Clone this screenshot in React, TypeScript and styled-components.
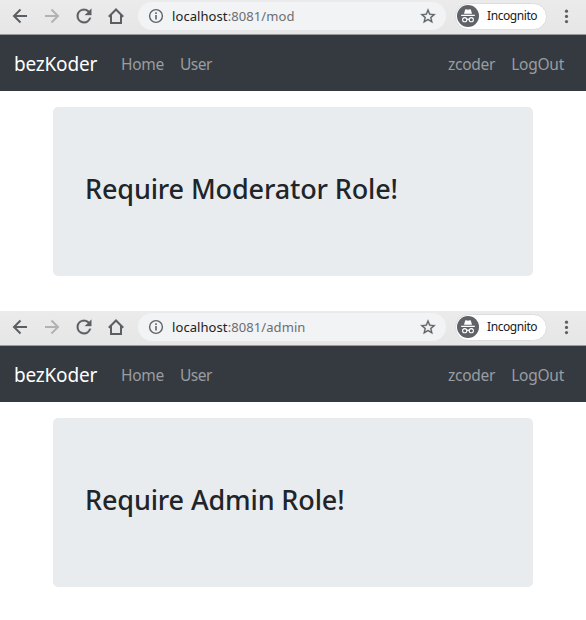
import React from "react";
import styled, { createGlobalStyle } from "styled-components";

const GlobalStyle = createGlobalStyle`
  *, *::before, *::after { box-sizing: border-box; }
  body {
    margin: 0;
    background: #fff;
    color: #212529;
    font-family: "Noto Sans", "Open Sans", sans-serif;
  }
`;

const Page = styled.main`
  display: flex;
  flex-direction: column;
  gap: 35px;
  width: 586px;
  height: 620px;
  overflow: hidden;
`;

const BrowserWindow = styled.section`
  display: flex;
  flex-direction: column;
`;

const Toolbar = styled.div`
  display: flex;
  align-items: center;
  height: 35px;
  padding: 0 9px 3px;
  background: linear-gradient(#ebebeb, #e6e6e6);
  border-bottom: 1px solid #98999b;
`;

const ToolButton = styled.button<{ $dim?: boolean }>`
  display: flex;
  align-items: center;
  justify-content: center;
  width: 22px;
  height: 28px;
  margin-right: 10px;
  padding: 0;
  border: 0;
  background: none;
  color: ${(p) => (p.$dim ? "#b1b2b4" : "#5b5e63")};
`;

const AddressBar = styled.div`
  display: flex;
  align-items: center;
  width: 308px;
  height: 28px;
  margin: 1px 9px 0 1px;
  padding: 0 10px;
  border-radius: 14px;
  background: #f1f3f4;
  color: #5f6368;
`;

const Url = styled.span`
  flex: 1;
  padding-left: 8px;
  font-size: 13px;
  line-height: 18px;
  letter-spacing: 0.08px;
  color: #6b6e72;
`;

const Host = styled.span`
  color: #202124;
`;

const Profile = styled.div`
  display: flex;
  align-items: center;
  width: 92px;
  height: 27px;
  margin-top: 1px;
  padding-left: 1px;
  border: 1px solid #dcdddf;
  border-radius: 14px;
  background: #fff;
`;

const ProfileName = styled.span`
  margin-left: 8px;
  font-size: 12px;
  line-height: 16px;
  letter-spacing: -0.42px;
  color: #202124;
`;

const MenuButton = styled(ToolButton)`
  margin: 0 0 0 8px;
`;

const Navbar = styled.nav`
  display: flex;
  align-items: center;
  height: 56px;
  padding: 2px 22px 0 14px;
  background: #343a40;
`;

const Brand = styled.a`
  width: 107px;
  font-size: 19px;
  line-height: 30px;
  letter-spacing: -0.2px;
  color: #fff;
`;

const NavGroup = styled.div<{ $end?: boolean }>`
  display: flex;
  gap: 16px;
  margin-left: ${(p) => (p.$end ? "auto" : "0")};
`;

const NavLink = styled.a<{ $tracking: number }>`
  font-size: 15.5px;
  line-height: 24px;
  letter-spacing: ${(p) => p.$tracking}px;
  color: #9a9da0;
`;

const Jumbotron = styled.header`
  width: 480px;
  height: 169px;
  margin: 16px auto 0;
  padding: 65px 32px 64px;
  border-radius: 5px;
  background: #e9ecef;
`;

const Title = styled.h3`
  margin: 0;
  font-size: 27px;
  font-weight: 500;
  line-height: 34px;
  letter-spacing: -0.13px;
  white-space: nowrap;
`;

const BackIcon = () => (
  <svg width="22" height="22" viewBox="0 0 22 22" fill="none" stroke="currentColor" strokeWidth="2">
    <path d="M18 11H5.5M11.5 4.5 5 11l6.5 6.5" />
  </svg>
);

const ForwardIcon = () => (
  <svg width="22" height="22" viewBox="0 0 22 22" fill="none" stroke="currentColor" strokeWidth="2">
    <path d="M4 11h12.5M10.5 4.5 17 11l-6.5 6.5" />
  </svg>
);

const ReloadIcon = () => (
  <svg width="22" height="22" viewBox="0 0 24 24" fill="currentColor" stroke="currentColor" strokeWidth="0.3">
    <path d="M17.65 6.35A7.96 7.96 0 0 0 12 4a8 8 0 1 0 7.73 10h-2.08A6 6 0 1 1 12 6c1.66 0 3.14.69 4.22 1.78L13 11h7V4z" />
  </svg>
);

const HomeIcon = () => (
  <svg width="22" height="22" viewBox="0 0 22 22" fill="none" stroke="currentColor" strokeWidth="2">
    <path d="M3.8 11.8 11 4.5l7.2 7.3M6 10.2V18h10v-7.8" />
  </svg>
);

const InfoIcon = () => (
  <svg width="16" height="16" viewBox="0 0 16 16">
    <circle cx="8" cy="8" r="6.4" fill="none" stroke="currentColor" strokeWidth="1.4" />
    <path d="M7.2 7h1.6v4.5H7.2zM7.2 4.3h1.6v1.6H7.2z" fill="currentColor" />
  </svg>
);

const StarIcon = () => (
  <svg width="16" height="16" viewBox="1.5 1.2 21 21" fill="currentColor" stroke="currentColor" strokeWidth="0.3">
    <path d="m22 9.24-7.19-.62L12 2 9.19 8.63 2 9.24l5.46 4.73L5.82 21 12 17.27 18.18 21l-1.63-7.03zM12 15.4l-3.76 2.27 1-4.28-3.32-2.88 4.38-.38L12 6.1l1.71 4.04 4.38.38-3.32 2.88 1 4.28z" />
  </svg>
);

const IncognitoIcon = () => (
  <svg width="22" height="22" viewBox="0 0 22 22">
    <circle cx="11" cy="11" r="11" fill="#5f6368" />
    <path d="M7 8.7 8.1 4.8q.2-.7 1-.5l1.9.4 1.9-.4q.8-.2 1 .5L15 8.7zM4.2 9.8h13.6v1.1H4.2z" fill="#fff" />
    <g fill="none" stroke="#fff" strokeWidth="1.1">
      <circle cx="7.7" cy="14.7" r="2.1" />
      <circle cx="14.3" cy="14.7" r="2.1" />
      <path d="M9.8 14.5q1.2-.8 2.4 0" />
    </g>
  </svg>
);

const DotsIcon = () => (
  <svg width="22" height="22" viewBox="0 0 22 22" fill="currentColor">
    <circle cx="11.5" cy="6.2" r="1.6" />
    <circle cx="11.5" cy="11.4" r="1.6" />
    <circle cx="11.5" cy="16.6" r="1.6" />
  </svg>
);

interface WindowProps {
  path: string;
  title: string;
}

const AppWindow = ({ path, title }: WindowProps) => (
  <BrowserWindow>
    <Toolbar>
      <ToolButton aria-label="Back"><BackIcon /></ToolButton>
      <ToolButton $dim aria-label="Forward"><ForwardIcon /></ToolButton>
      <ToolButton aria-label="Reload"><ReloadIcon /></ToolButton>
      <ToolButton aria-label="Home"><HomeIcon /></ToolButton>
      <AddressBar>
        <InfoIcon />
        <Url><Host>localhost</Host>:8081/{path}</Url>
        <StarIcon />
      </AddressBar>
      <Profile>
        <IncognitoIcon />
        <ProfileName>Incognito</ProfileName>
      </Profile>
      <MenuButton aria-label="Menu"><DotsIcon /></MenuButton>
    </Toolbar>
    <Navbar>
      <Brand>bezKoder</Brand>
      <NavGroup>
        <NavLink $tracking={-0.3}>Home</NavLink>
        <NavLink $tracking={-0.5}>User</NavLink>
      </NavGroup>
      <NavGroup $end>
        <NavLink $tracking={-0.25}>zcoder</NavLink>
        <NavLink $tracking={-0.25}>LogOut</NavLink>
      </NavGroup>
    </Navbar>
    <Jumbotron>
      <Title>{title}</Title>
    </Jumbotron>
  </BrowserWindow>
);

export default function App() {
  return (
    <>
      <GlobalStyle />
      <Page>
        <AppWindow path="mod" title="Require Moderator Role!" />
        <AppWindow path="admin" title="Require Admin Role!" />
      </Page>
    </>
  );
}
